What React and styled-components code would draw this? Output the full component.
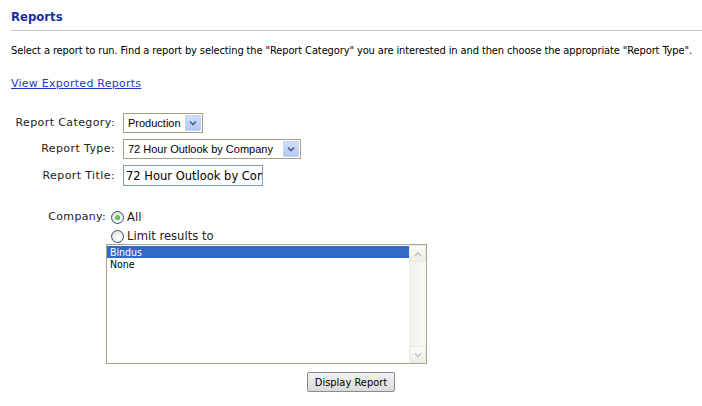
import React from "react";
import styled, { createGlobalStyle } from "styled-components";

const Global = createGlobalStyle`
  html, body { margin: 0; padding: 0; background: #fff; }
  body { font-family: "DejaVu Sans Condensed", "DejaVu Sans", sans-serif; color: #000; }
`;

const Page = styled.div`
  padding: 7px 0 0 11px;
  width: 691px;
`;

const Heading = styled.h1`
  margin: 0;
  font-family: "DejaVu Sans Condensed", "DejaVu Sans", sans-serif;
  font-weight: bold;
  font-size: 13px;
  line-height: 19px;
  color: #15339c;
  padding-bottom: 4px;
  border-bottom: 1px solid #c9c9c9;
`;

const Intro = styled.p`
  margin: 13px 0 0;
  font-size: 11px;
  line-height: 14px;
  letter-spacing: -0.11px;
  white-space: nowrap;
`;

const Link = styled.a`
  display: inline-block;
  margin-top: 19px;
  font-family: "DejaVu Sans", Verdana, sans-serif;
  font-size: 11px;
  line-height: 14px;
  letter-spacing: 0.25px;
  color: #1a3cbf;
  text-decoration: underline;
  cursor: pointer;
`;

const FormGrid = styled.div`
  display: grid;
  grid-template-columns: 104px auto;
  column-gap: 8px;
  row-gap: 6px;
  margin-top: 22px;
  align-items: center;
  justify-items: start;
`;

const Label = styled.label`
  justify-self: end;
  font-family: "DejaVu Sans", Verdana, sans-serif;
  font-size: 11px;
  line-height: 14px;
  color: #222;
  letter-spacing: 0.4px;
  white-space: nowrap;
`;

const SelectBox = styled.div`
  display: flex;
  align-items: center;
  box-sizing: border-box;
  width: ${(p) => p.$width}px;
  height: 20px;
  border: 1px solid #a69f80;
  background: #fff;
  padding: 1px;
`;

const SelectText = styled.span`
  flex: 1;
  padding-left: 3px;
  font-family: "Liberation Sans", Arial, sans-serif;
  font-size: 11px;
  color: #000;
  white-space: nowrap;
  overflow: hidden;
`;

const ArrowButton = styled.span`
  display: flex;
  align-items: center;
  justify-content: center;
  width: 16px;
  height: 16px;
  box-sizing: border-box;
  background: linear-gradient(#d2def9, #b4c8f3);
  border: 1px solid #c3d3f5;
  border-radius: 1px;
`;

const TextInput = styled.input`
  box-sizing: border-box;
  width: 140px;
  height: 21px;
  margin: 0;
  border: 1px solid #7f9db9;
  padding: 1px 0 0 2px;
  font-family: "DejaVu Sans", Verdana, sans-serif;
  font-size: 11.5px;
  color: #000;
  outline: none;
  background: #fff;
`;

const CompanyGrid = styled.div`
  display: grid;
  grid-template-columns: 95px auto;
  margin-top: 21px;
  align-items: start;
`;

const CompanyLabel = styled(Label)`
  padding-right: 0;
  letter-spacing: 0.3px;
  margin-top: 3px;
`;

const Options = styled.div`
  display: flex;
  flex-direction: column;
`;

const RadioRow = styled.div`
  display: flex;
  align-items: center;
  gap: 3px;
  margin-left: 5px;
  height: 19px;
  font-family: "DejaVu Sans", Verdana, sans-serif;
  font-size: 11.6px;
  color: #222;
`;

const Radio = styled.span`
  width: 11px;
  height: 11px;
  border-radius: 50%;
  border: 1px solid #2f4f7a;
  background: radial-gradient(circle at 65% 65%, #ffffff 0%, #f0f0ea 45%, #d4d4cc 100%);
  display: flex;
  align-items: center;
  justify-content: center;
  margin-top: 2px;
`;

const Dot = styled.span`
  width: 5px;
  height: 5px;
  border-radius: 50%;
  background: radial-gradient(circle at 40% 40%, #7ee07e, #1e9a1e);
`;

const ListBox = styled.div`
  display: flex;
  box-sizing: border-box;
  width: 321px;
  height: 120px;
  border: 1px solid #a6a68a;
  margin-top: -1px;
  background: #fff;
`;

const Items = styled.div`
  flex: 1;
  padding-top: 1px;
`;

const Item = styled.div`
  height: 12px;
  line-height: 12px;
  padding-left: 3px;
  font-family: "DejaVu Sans Condensed", "DejaVu Sans", sans-serif;
  font-size: 10.5px;
  color: ${(p) => (p.$selected ? "#fff" : "#000")};
  background: ${(p) => (p.$selected ? "#316ac5" : "transparent")};
`;

const ScrollBar = styled.div`
  width: 17px;
  display: flex;
  flex-direction: column;
  justify-content: space-between;
  background: linear-gradient(90deg, #f1f1ea, #fbfbf7);
`;

const ScrollButton = styled.span`
  box-sizing: border-box;
  width: 17px;
  height: 17px;
  display: flex;
  align-items: center;
  justify-content: center;
  border: 1px solid #ebebe4;
  border-radius: 2px;
  background: linear-gradient(#fbfbf8, #eeeee6);
`;

const ButtonRow = styled.div`
  display: flex;
  justify-content: center;
  margin-top: 8px;
  padding-right: 11px;
`;

const Button = styled.button`
  box-sizing: border-box;
  width: 88px;
  height: 20px;
  padding: 0;
  border: 1px solid #8c8c8c;
  border-radius: 2px;
  background: linear-gradient(#f2f2f2, #dadada);
  font-family: "DejaVu Sans Condensed", "DejaVu Sans", sans-serif;
  font-size: 11px;
  color: #000;
`;

const Chevron = ({ up, color = "#4d6185", size = 8 }) => (
  <svg width={size} height={size * 0.75} viewBox="0 0 8 6">
    <path
      d={up ? "M1 5 L4 2 L7 5" : "M1 1.5 L4 4.5 L7 1.5"}
      fill="none"
      stroke={color}
      strokeWidth="1.6"
    />
  </svg>
);

export default function App() {
  return (
    <>
      <Global />
      <Page>
        <Heading>Reports</Heading>
        <Intro>
          Select a report to run. Find a report by selecting the "Report Category" you are
          interested in and then choose the appropriate "Report Type".
        </Intro>
        <Link>View Exported Reports</Link>

        <FormGrid>
          <Label>Report Category:</Label>
          <SelectBox $width={80}>
            <SelectText>Production</SelectText>
            <ArrowButton>
              <Chevron />
            </ArrowButton>
          </SelectBox>

          <Label>Report Type:</Label>
          <SelectBox $width={178}>
            <SelectText>72 Hour Outlook by Company</SelectText>
            <ArrowButton>
              <Chevron />
            </ArrowButton>
          </SelectBox>

          <Label>Report Title:</Label>
          <TextInput readOnly value="72 Hour Outlook by Company" />
        </FormGrid>

        <CompanyGrid>
          <CompanyLabel>Company:</CompanyLabel>
          <Options>
            <RadioRow>
              <Radio>
                <Dot />
              </Radio>
              All
            </RadioRow>
            <RadioRow>
              <Radio />
              Limit results to
            </RadioRow>
          </Options>
          <span />
          <ListBox>
            <Items>
              <Item $selected>Bindus</Item>
              <Item>None</Item>
            </Items>
            <ScrollBar>
              <ScrollButton>
                <Chevron up color="#c4c8bc" />
              </ScrollButton>
              <ScrollButton>
                <Chevron color="#c4c8bc" />
              </ScrollButton>
            </ScrollBar>
          </ListBox>
        </CompanyGrid>

        <ButtonRow>
          <Button>Display Report</Button>
        </ButtonRow>
      </Page>
    </>
  );
}
